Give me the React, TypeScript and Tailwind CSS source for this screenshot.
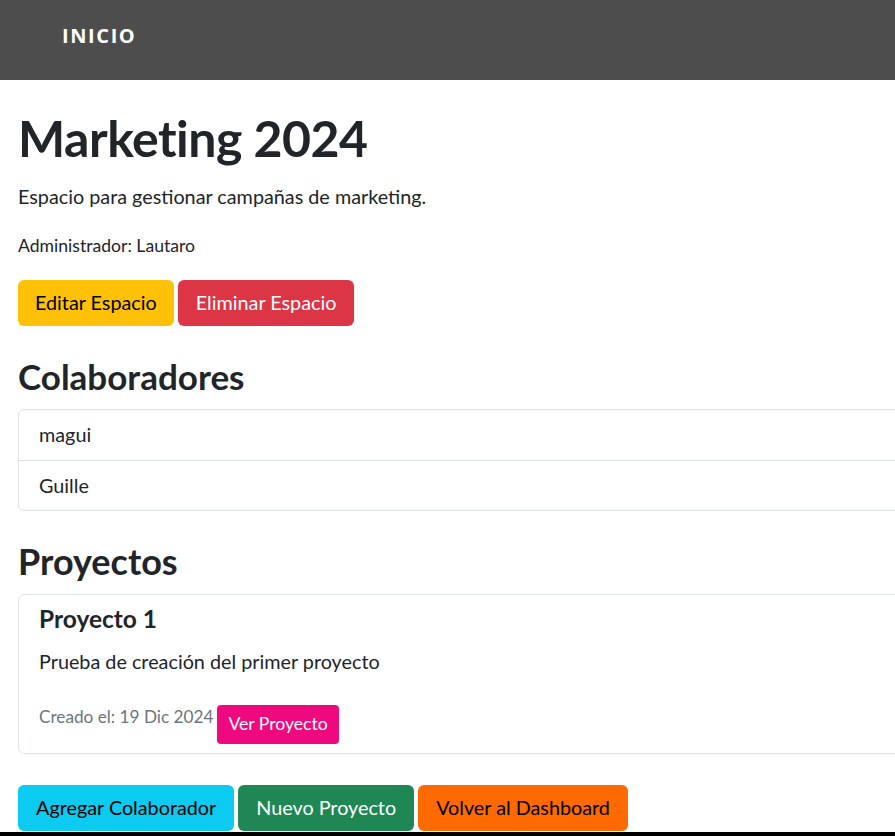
export default function App() {
  const colaboradores = ["magui", "Guille"];

  return (
    <div className="w-full min-h-[836px] overflow-hidden bg-white font-['Lato','Noto_Sans',sans-serif] text-[#212529]">
      <nav className="h-20 bg-[#4d4d4d] flex items-center px-[62px] pb-2">
        <span className="text-white text-[20px] font-bold tracking-[0.08em] font-['Open_Sans',sans-serif]">
          INICIO
        </span>
      </nav>

      <main className="w-[1100px] px-[18px] pt-[28px]">
        <h1 className="h-[60px] text-[50px] font-bold leading-[60px] tracking-[-0.01em]">Marketing 2024</h1>
        <p className="mt-[13px] text-[19.8px] leading-[30px]">Espacio para gestionar campañas de marketing.</p>
        <p className="mt-[22px] text-[17.6px] leading-[26px]">Administrador: Lautaro</p>

        <div className="mt-[21px] flex gap-1">
          <button className="h-[46px] px-[17px] rounded-md bg-[#ffc107] text-black text-[19.8px]">Editar Espacio</button>
          <button className="h-[46px] px-[18px] rounded-md bg-[#dc3545] text-white text-[19.8px]">Eliminar Espacio</button>
        </div>

        <h2 className="mt-[29px] text-[35px] font-bold leading-[42px]">Colaboradores</h2>
        <ul className="mt-[12px] border border-[#dee2e6] rounded-md">
          {colaboradores.map((c, i) => (
            <li
              key={c}
              className={`h-[50px] px-5 flex items-center text-[19.8px] ${i > 0 ? "border-t border-[#dee2e6]" : ""}`}
            >
              {c}
            </li>
          ))}
        </ul>

        <h2 className="mt-[29px] text-[36px] font-bold leading-[42px]">Proyectos</h2>
        <div className="mt-[12px] border border-[#dee2e6] rounded-md px-5 pt-[8px] h-[160px]">
          <h3 className="text-[24.5px] font-bold leading-[32px]">Proyecto 1</h3>
          <p className="mt-[11px] text-[19.8px] leading-[30px]">Prueba de creación del primer proyecto</p>
          <div className="mt-[28px] flex items-start gap-1">
            <span className="text-[17.2px] text-[#6c757d] leading-[26px]">Creado el: 19 Dic 2024</span>
            <button className="h-[39px] px-[11px] rounded bg-[#ee0a7e] text-white text-[17.6px] mt-[1px]">
              Ver Proyecto
            </button>
          </div>
        </div>

        <div className="mt-[31px] flex gap-1">
          <button className="h-[46px] px-[18px] rounded-md bg-[#0dcaf0] text-black text-[19.8px]">Agregar Colaborador</button>
          <button className="h-[46px] px-[18px] rounded-md bg-[#1e8754] text-white text-[19.8px]">Nuevo Proyecto</button>
          <button className="h-[46px] px-[18px] rounded-md bg-[#ff6a00] text-black text-[19.8px]">Volver al Dashboard</button>
        </div>
      </main>
      <footer className="mt-px h-10 bg-black" />
    </div>
  );
}
